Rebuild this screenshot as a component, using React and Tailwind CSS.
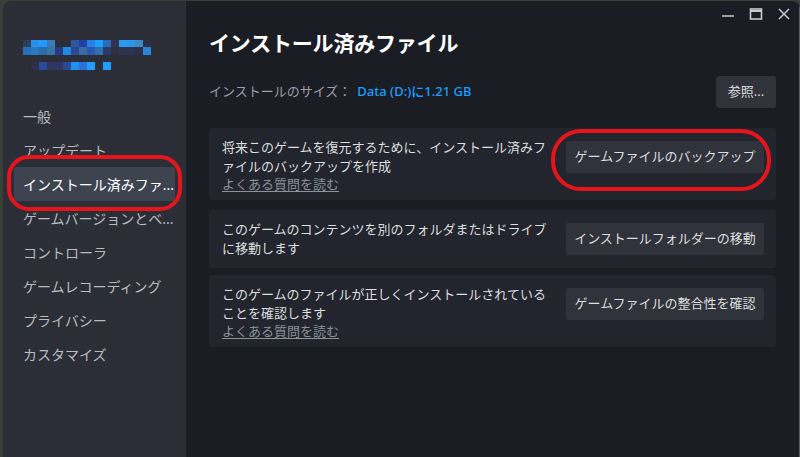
import React from "react";

const row1 = ["#2e3f55","#2a8fe8","#1f9bff","#3a7ab8","#2b2e36","#2b2e36","#2b5aa0","#2140a8","#2a7fe0","#1e9fff","#2a6ab8","#2d3350","#2a9bf0","#2a98e8","#3a8ac8","#2e3145"];
const row2 = ["#2a70b8","#2a78c0","#2a6aa8","#3575a8","#2a3a80","#1e8ae8","#2a4a90","#3a6aa0","#2a5ab0","#2e70b0","#2a3a6a","#2e3040","#2e3350","#2e3450","#2d3048","#2a85d8"];
const row3 = ["#2b2e36","#30304a","#2a4aa0","#2d3560","#2d3560","#2a4a90","#1e8ef0","#2a70d8","#1e9fff","#2b2e36","#1e9fff"];

function PixelRow({ colors, h }) {
  return (
    <div className="flex">
      {colors.map((c, i) => (
        <div key={i} className={`w-[8px] ${h}`} style={{ backgroundColor: c }} />
      ))}
    </div>
  );
}

const navItems = [
  "一般",
  "アップデート",
  "インストール済みファ...",
  "ゲームバージョンとベ...",
  "コントローラ",
  "ゲームレコーディング",
  "プライバシー",
  "カスタマイズ",
];

function Card({ desc, button, link, className = "" }) {
  return (
    <div className={`bg-[#22252d] rounded-[3px] pl-[13px] pr-[12px] pt-[10px] ${link ? "pb-[7px]" : "pb-[10px]"} ${className}`}>
      <div className="flex items-center gap-[12px]">
        <div className="flex-1 text-[13px] leading-[19px] text-[#dcdedf]">{desc}</div>
        <div className="w-[198px] h-[32px] shrink-0 bg-[#30333b] rounded-[2px] flex items-center justify-center text-[13px] text-[#dcdedf]">
          {button}
        </div>
      </div>
      {link && (
        <div className="text-[13px] leading-[17px] text-[#8b929a] underline underline-offset-2">{link}</div>
      )}
    </div>
  );
}

export default function App() {
  return (
    <div
      className="w-[800px] h-[457px] bg-[#3b3f37] overflow-hidden relative"
      style={{ fontFamily: '"Noto Sans", "Noto Sans CJK JP", sans-serif' }}
    >
      <div className="absolute inset-0 left-[3px] top-[1px] flex rounded-tl-[8px] rounded-tr-[8px] overflow-hidden">
        {/* Sidebar */}
        <div className="w-[183px] shrink-0 bg-[#2b2e36] flex flex-col">
          <div className="pl-[20px] pt-[39px]">
            <PixelRow colors={row1} h="h-[7px]" />
            <PixelRow colors={row2} h="h-[8px]" />
            <div className="h-[7px]" />
            <PixelRow colors={row3} h="h-[8px]" />
          </div>
          <div className="mt-[29px] flex flex-col px-[11px]">
            {navItems.map((t, i) => (
              <div
                key={i}
                className={`h-[34px] flex items-center pl-[9px] text-[14px] whitespace-nowrap rounded-[3px] ${
                  i === 2 ? "bg-[#3d4450] text-white" : "text-[#b8bcbf]"
                }`}
              >
                {t}
              </div>
            ))}
          </div>
        </div>
        {/* Main */}
        <div className="flex-1 bg-[#1a1d24] relative pl-[23px] pr-[23px] border-r border-[#5a5d63]">
          {/* window controls */}
          <div className="absolute top-[6px] right-[8px] flex items-center gap-[14px] text-[#c7cacd]">
            <svg width="14" height="14" viewBox="0 0 14 14"><line x1="1" y1="9" x2="13" y2="9" stroke="currentColor" strokeWidth="1.6" /></svg>
            <svg width="14" height="14" viewBox="0 0 14 14"><rect x="1.5" y="2" width="11" height="10" fill="none" stroke="currentColor" strokeWidth="1.6" /><line x1="1.5" y1="4" x2="12.5" y2="4" stroke="currentColor" strokeWidth="2" /></svg>
            <svg width="14" height="14" viewBox="0 0 14 14"><path d="M2 2 L12 12 M12 2 L2 12" stroke="currentColor" strokeWidth="1.5" /></svg>
          </div>
          <div className="pt-[27px] text-[21px] leading-[30px] font-bold text-white tracking-[-0.2px]">
            インストール済みファイル
          </div>
          <div className="mt-[18px] flex items-center justify-between">
            <div className="text-[13px] text-[#9a9ea6] flex items-center">
              <span>インストールのサイズ：</span>
              <span className="ml-[6px] text-[#1a9fff] font-medium">Data (D:)に1.21 GB</span>
            </div>
            <div className="w-[60px] h-[32px] bg-[#30333b] rounded-[3px] flex items-center justify-center text-[13px] text-[#dcdedf]">
              参照...
            </div>
          </div>
          <div className="mt-[20px]">
            <Card
              desc="将来このゲームを復元するために、インストール済みファイルのバックアップを作成"
              button="ゲームファイルのバックアップ"
              link="よくある質問を読む"
            />
            <Card
              className="mt-[10px]"
              desc="このゲームのコンテンツを別のフォルダまたはドライブに移動します"
              button="インストールフォルダーの移動"
            />
            <Card
              className="mt-[7px]"
              desc="このゲームのファイルが正しくインストールされていることを確認します"
              button="ゲームファイルの整合性を確認"
              link="よくある質問を読む"
            />
          </div>
        </div>
      </div>
      {/* red annotation ellipses */}
      <div className="absolute left-[7px] top-[155px] w-[175px] h-[56px] border-[4px] border-[#e8141c] rounded-[22px]" />
      <div className="absolute left-[551px] top-[129px] w-[220px] h-[62px] border-[4px] border-[#e8141c] rounded-[30px]" />
    </div>
  );
}
